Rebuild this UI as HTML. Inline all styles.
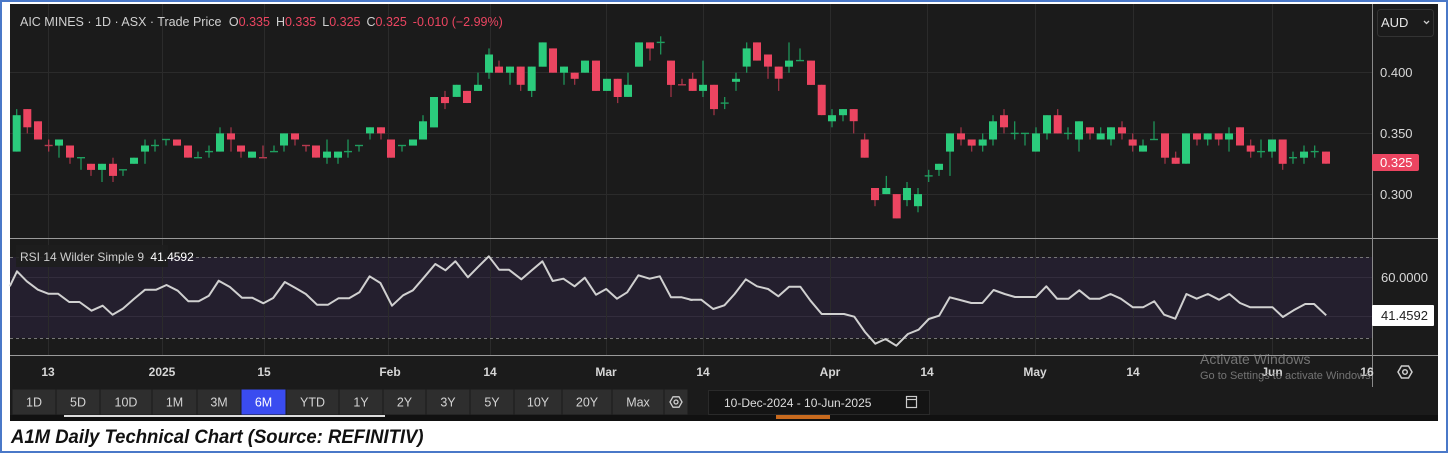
<!DOCTYPE html>
<html><head><meta charset="utf-8">
<style>
*{margin:0;padding:0;box-sizing:border-box}
html,body{width:1448px;height:453px;background:#fff;overflow:hidden;font-family:"Liberation Sans",sans-serif}
#frame{position:absolute;left:0;top:0;width:1448px;height:453px;border:2px solid #4a78c8;border-top-width:2px}
#chart{position:absolute;left:10px;top:4px;width:1428px;height:417px;background:#1b1b1b}
svg text{font-family:"Liberation Sans",sans-serif}
.cap{position:absolute;left:11px;top:425px;font-size:18.5px;font-weight:bold;font-style:italic;color:#111;transform:scaleY(1.05);transform-origin:left top}
</style></head><body>
<div id="frame"></div>
<div id="chart"></div>
<svg id="s" width="1448" height="453" style="position:absolute;left:0;top:0">
<rect x="10" y="257" width="1362" height="81" fill="#241f2e"/>
<g stroke="#2b2b2b" stroke-width="1">
<line x1="10" y1="72.5" x2="1372" y2="72.5"/><line x1="10" y1="133.5" x2="1372" y2="133.5"/><line x1="10" y1="194.5" x2="1372" y2="194.5"/>
<line x1="10" y1="277.5" x2="1372" y2="277.5" stroke="#332d3d"/><line x1="10" y1="316.5" x2="1372" y2="316.5" stroke="#332d3d"/>
<line x1="48.5" y1="4" x2="48.5" y2="355"/><line x1="162.5" y1="4" x2="162.5" y2="355"/><line x1="264.5" y1="4" x2="264.5" y2="355"/>
<line x1="388.5" y1="4" x2="388.5" y2="355"/><line x1="490.5" y1="4" x2="490.5" y2="355"/><line x1="606.5" y1="4" x2="606.5" y2="355"/>
<line x1="703.5" y1="4" x2="703.5" y2="355"/><line x1="830.5" y1="4" x2="830.5" y2="355"/><line x1="927.5" y1="4" x2="927.5" y2="355"/>
<line x1="1035.5" y1="4" x2="1035.5" y2="355"/><line x1="1133.5" y1="4" x2="1133.5" y2="355"/><line x1="1272.5" y1="4" x2="1272.5" y2="355"/>
</g>
<line x1="10" y1="257.5" x2="1372" y2="257.5" stroke="#777" stroke-dasharray="3,3"/>
<line x1="10" y1="338.5" x2="1372" y2="338.5" stroke="#777" stroke-dasharray="3,3"/>
<line x1="10" y1="238.5" x2="1438" y2="238.5" stroke="#9a9a9a"/>
<line x1="10" y1="355.5" x2="1438" y2="355.5" stroke="#9a9a9a"/>
<line x1="1372.5" y1="4" x2="1372.5" y2="387" stroke="#8a8a8a"/>
<g id="candles"></g>
<polyline id="rsi" fill="none" stroke="#d0d0d0" stroke-width="2" stroke-linejoin="round"/>
<text x="20" y="26" font-size="12.5" fill="#d0d0d0">AIC MINES · 1D · ASX · Trade Price <tspan dx="4">O</tspan><tspan fill="#ec4561">0.335</tspan><tspan dx="6">H</tspan><tspan fill="#ec4561">0.335</tspan><tspan dx="6">L</tspan><tspan fill="#ec4561">0.325</tspan><tspan dx="6">C</tspan><tspan fill="#ec4561">0.325</tspan><tspan dx="6" fill="#ec4561">-0.010 (−2.99%)</tspan></text>
<rect x="16" y="245" width="152" height="22" fill="#1e1e1e" opacity="0.9"/>
<text x="20" y="261" font-size="12" fill="#cfcfcf">RSI 14 Wilder Simple 9 <tspan dx="3" fill="#fff">41.4592</tspan></text>
<rect x="1377.5" y="9.5" width="56" height="27" rx="3" fill="#1b1b1b" stroke="#333"/>
<text x="1381" y="27" font-size="13" fill="#e6e6e6">AUD</text>
<path d="M1424 21 l2.5 2.5 l2.5 -2.5" stroke="#ccc" fill="none" stroke-width="1.3"/>
<g font-size="13" fill="#d8d8d8">
<text x="1380" y="77">0.400</text><text x="1380" y="138">0.350</text><text x="1380" y="199">0.300</text>
<text x="1381" y="282">60.0000</text>
</g>
<rect x="1372" y="154" width="47" height="17" rx="2" fill="#ec4561"/>
<text x="1380" y="167" font-size="13" fill="#fff">0.325</text>
<rect x="1372" y="305" width="62" height="21" rx="1" fill="#fff"/>
<text x="1381" y="320" font-size="13" fill="#222">41.4592</text>
<g font-size="12" fill="#d6d6d6" font-weight="bold" text-anchor="middle">
<text x="48" y="376">13</text><text x="162" y="376">2025</text><text x="264" y="376">15</text><text x="390" y="376">Feb</text>
<text x="490" y="376">14</text><text x="606" y="376">Mar</text><text x="703" y="376">14</text><text x="830" y="376">Apr</text>
<text x="927" y="376">14</text><text x="1035" y="376">May</text><text x="1133" y="376">14</text><text x="1272" y="376">Jun</text><text x="1367" y="376">16</text>
</g>
<text x="1200" y="364" font-size="14" fill="#8a8a8a" opacity="0.8">Activate Windows</text>
<text x="1200" y="379" font-size="11" fill="#8a8a8a" opacity="0.8">Go to Settings to activate Windows.</text>
<g transform="translate(1405,372)" fill="none" stroke="#cfcfcf" stroke-width="1.5"><path d="M-7 0 L-3.5 -6 L3.5 -6 L7 0 L3.5 6 L-3.5 6 Z"/><circle r="2.3"/></g>
<g id="btns"></g>
<rect x="708.5" y="390.5" width="221" height="24" fill="#141414" stroke="#2a2a2a"/>
<text x="724" y="407" font-size="12" fill="#ddd">10-Dec-2024  -  10-Jun-2025</text>
<g fill="none" stroke="#ccc" stroke-width="1.2"><rect x="906.5" y="396.5" width="10" height="11"/><line x1="906.5" y1="399.5" x2="916.5" y2="399.5"/></g>
<rect x="10" y="415" width="1428" height="6" fill="#111"/>
<rect x="64" y="415" width="321" height="2" fill="#ddd"/>
<rect x="776" y="415" width="54" height="4" fill="#c86a1e"/>
</svg>
<div class="cap">A1M Daily Technical Chart (Source: REFINITIV)</div>
<script>
var C=[[16.7,13,7,6,13],[27.3,6,9,6,10],[38,8,11],[48.7,12,12,11,13],[59,12,11,11,14],[70,12,14,12,15],[81,14,14,14,16,1],[91,15,16,15,17],[102,16,15,15,18],[113,15,17,14,18],[123,16,16,16,17,1],[134,15,14],[145,13,12,11,15],[155,12,12,11,13,1],[166,11,11,11,12,1],[177,11,12],[188,12,14],[198,14,14,13,14,1],[209,13,13,12,14,1],[220,13,10,9,13],[231,10,11,9,13],[241,12,13,12,14],[252,14,13],[263,14,14,12,14],[274,13,13,12,13,1],[284,12,10,10,13],[295,10,11,10,12],[306,12,12,12,13],[316,12,14],[327,14,13,11,15],[338,14,13,13,15],[348,13,13,11,14,1],[359,12,12,12,13,1],[370,10,9,9,11],[381,9,10,9,11],[391,11,14],[402,12,12,12,13,1],[413,12,11],[423,11,8,7,11],[434,9,4],[445,4,5,3,6],[456.7,4,2],[467,3,5,3,5],[478,3,2,0,3],[489,0,-3,-4,1],[499,-1,0,-2,0],[510,0,-1,-1,2],[520.7,-1,2,-1,3],[531.7,3,-1,-1,4],[542.7,-1,-5],[553,-4,0],[564,0,-1,-1,2],[574.7,0,1,0,2],[585,0,-2],[596,-2,3],[607,3,1],[617.7,1,4,1,5],[628,4,2,0,4],[639,-1,-5],[650,-5,-4,-5,-2],[660.7,-5,-5,-6,-3,1],[671,-2,2,-2,4],[682,2,2,1,2],[692.7,1,3,0,3],[703,3,2,-2,4],[714,2,6,2,7],[724.7,5,5,4,6,1],[736,1.5,1,0,3],[746.7,-1,-4,-5,0],[757,-5,-2],[768,-3,-1,-3,1],[778.7,-1,1,-1,3],[789,-1,-2,-5,0],[800,-2,-2,-4,-2,1],[811,-2,2],[821.7,2,7],[832,8,7,6,9],[843,7,6,6,8],[853.7,6,8,6,10],[864.7,11,14,10,14],[875,19,21,19,22],[886.3,20,19,17,20],[896.7,20,24],[907,21,19,18,22],[918,22,20,19,23],[928.7,17,17,16,18,1],[939,16,15,15,17],[950,13,10,10,17],[961,10,11,9,12],[971.7,11,12,11,13],[982.7,12,11,10,13],[993,11,8,7,12],[1004,7,9,6,10],[1014.7,10,10,8,11,1],[1025,10,10,10,12,1],[1036,13,10,9,13],[1047,10,7,7,11],[1057.7,7,10,6,10],[1068,10,10,9,11,1],[1079,11,8,8,13],[1090,9,10,9,11],[1100.7,11,10,9,11],[1111,11,9,9,12],[1122,9,10,8,11],[1132.7,11,12,10,13],[1143,13,12,11,13],[1154,11,11,8,11,1],[1165,10,14,10,15],[1175.7,14,15,13,15],[1186,15,10],[1197,10,11,10,12],[1207.7,11,10,10,12],[1218.7,10,11,10,12],[1229,11,10,9,13],[1240,9,12],[1250.7,12,13,11,14],[1261,13,13,11,14,1],[1272,13,11,11,14],[1282.7,11,15,11,16],[1293,14,14,13,15,1],[1304,14,13,12,15],[1314.7,13,13,12,14,1],[1326,13,15]];
function Y(t){return 72.7+t*6.07}
var h='';
C.forEach(function(c){var x=c[0],o=c[1],cl=c[2],hi=c.length>3?c[3]:Math.min(o,cl),lo=c.length>3?c[4]:Math.max(o,cl);
var dj=c[5]||o==cl;var col=dj?(c[5]?'#1f9e5f':'#b83a50'):(cl<o?'#2bcb7c':'#ec4561');
h+='<line x1="'+x+'" x2="'+x+'" y1="'+Y(hi).toFixed(1)+'" y2="'+Y(lo).toFixed(1)+'" stroke="'+(dj?col:(cl<o?'#1f9e5f':'#a8354a'))+'" stroke-width="1.2"/>';
if(dj){h+='<line x1="'+(x-4)+'" x2="'+(x+4)+'" y1="'+Y(o).toFixed(1)+'" y2="'+Y(o).toFixed(1)+'" stroke="'+col+'" stroke-width="1.4"/>';}
else{var a=Y(Math.min(o,cl)),b=Y(Math.max(o,cl));h+='<rect x="'+(x-4)+'" y="'+a.toFixed(1)+'" width="8" height="'+(b-a).toFixed(1)+'" fill="'+col+'"/>';}
});
document.getElementById('candles').innerHTML=h;
var z1=[[22,145],[38,100],[60,130],[85,155],[108,167],[130,167],[155,192],[178,192],[205,218],[230,203],[252,230],[275,212],[300,183],[325,155],[350,155],[373,141],[398,158],[422,190],[445,190],[468,173],[490,128],[515,147],[542,179],[565,179],[590,196],[612,180],[638,132],[662,150],[685,168],[710,200],[735,200],[758,181],[782,181],[805,163],[828,115],[852,135],[878,203],[903,172],[925,157],[950,118],[975,78],[998,97],[1020,70],[1048,118],[1070,88],[1095,55],[1118,95],[1140,95],[1168,124],[1192,96],[1215,70],[1238,129],[1262,122],[1287,145],[1310,119],[1335,170],[1358,153],[1382,182],[1405,163],[1430,112],[1455,122],[1478,115],[1503,178],[1527,178],[1550,186]];
var z2=[[0,185],[25,185],[52,213],[77,202],[100,168],[125,124],[150,145],[175,153],[198,175],[222,146],[247,146],[270,188],[295,228],[320,228],[345,228],[368,236],[392,282],[415,317],[438,303],[462,323],[488,288],[512,275],[535,243],[558,233],[582,178],[605,186],[630,195],[655,195],[680,156],[705,168],[728,177],[752,177],[775,177],[798,145],[822,182],[848,182],[872,157],[895,182],[918,182],[942,168],[965,182],[992,208],[1015,208],[1040,190],[1062,230],[1087,242],[1112,168],[1135,182],[1160,168],[1185,185],[1208,168],[1232,195],[1255,208],[1280,208],[1305,208],[1328,237],[1352,217],[1378,198],[1398,198],[1425,232]];
var k=1568/700,p=[];
z1.forEach(function(a){p.push((a[0]/k).toFixed(1)+','+(238+a[1]/3).toFixed(1))});
z2.forEach(function(a){p.push((690+a[0]/k).toFixed(1)+','+(238+a[1]/3).toFixed(1))});
document.getElementById('rsi').setAttribute('points',p.join(' '));
var B=[['1D',12,56],['5D',56,100],['10D',100,152],['1M',152,197],['3M',197,241],['6M',241,286],['YTD',286,339],['1Y',339,383],['2Y',383,426],['3Y',426,470],['5Y',470,514],['10Y',514,562],['20Y',562,612],['Max',612,664],['',664,688]];
var g='';
B.forEach(function(b){var act=b[0]=='6M';g+='<rect x="'+(b[1]+0.5)+'" y="389.5" width="'+(b[2]-b[1]-1)+'" height="25" fill="'+(act?'#3a4cf0':'#2e2e2e')+'"/>';
if(b[0])g+='<text x="'+((b[1]+b[2])/2)+'" y="406.5" font-size="12.5" text-anchor="middle" fill="'+(act?'#fff':'#d4d4d4')+'">'+b[0]+'</text>';});
g+='<g transform="translate(676,402)" fill="none" stroke="#cfcfcf" stroke-width="1.3"><path d="M-6 0 L-3 -5.2 L3 -5.2 L6 0 L3 5.2 L-3 5.2 Z"/><circle r="2"/></g>';
document.getElementById('btns').innerHTML=g;
</script>
</body></html>
